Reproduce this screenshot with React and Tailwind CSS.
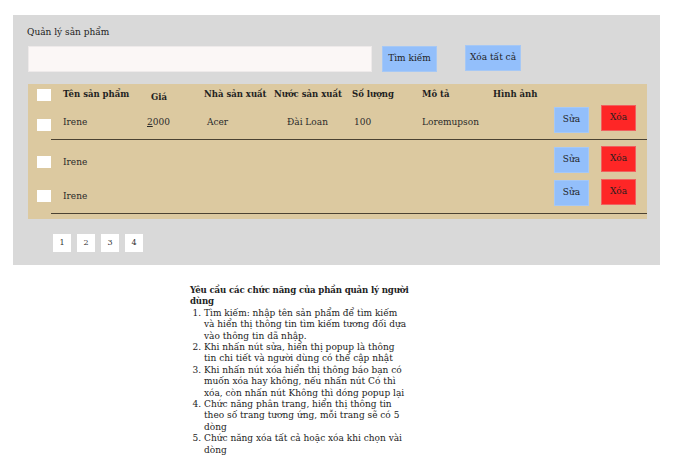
import React from "react";

const F = { fontFamily: '"DejaVu Serif", "Liberation Serif", serif' };

function Box({ className = "" }) {
  return <div className={`w-[14px] h-[12px] bg-white ${className}`} />;
}

function Btn({ children, red, className = "" }) {
  return (
    <div
      className={`w-[35px] h-[26px] flex items-center justify-center text-[9px] text-[#1e1e1e] ${
        red ? "bg-[#fe2626] border border-[#f06060]" : "bg-[#93bffb] border border-[#a6c8f5]"
      } ${className}`}
    >
      {children}
    </div>
  );
}

function DataRow({ h, boxTop, textTop, suaTop, xoaTop, full }) {
  return (
    <div className={`flex items-start ${h}`}>
      <div className="w-[35px] pl-[9px]">
        <Box className={boxTop} />
      </div>
      <div className={`flex text-[9px] text-[#2a2a2a] leading-[12px] ${textTop}`}>
        <div className="w-[84px]">Irene</div>
        {full ? (
          <>
            <div className="w-[57px]">
              <span className="underline">2</span>000
            </div>
            <div className="w-[70px] pl-[3px]">Acer</div>
            <div className="w-[78px] pl-[13px]">Đài Loan</div>
            <div className="w-[70px] pl-[2px]">100</div>
            <div className="w-[132px]">Loremupson</div>
          </>
        ) : (
          <div className="w-[407px]" />
        )}
      </div>
      <Btn className={suaTop}>Sửa</Btn>
      <Btn red className={`ml-[12px] ${xoaTop}`}>Xóa</Btn>
    </div>
  );
}

export default function App() {
  return (
    <div className="w-[678px] h-[463px] bg-white overflow-hidden" style={F}>
      <div className="ml-[13px] mt-[15px] w-[647px] h-[250px] bg-[#d9d9d9] pl-[15px] pt-[11px]">
        <div className="text-[9px] leading-[12px] text-[#222] -ml-[1px]">Quản lý sản phẩm</div>
        <div className="flex items-start mt-[8px]">
          <div className="w-[344px] h-[26px] bg-[#fbf7f6] border border-[#eeeaea]" />
          <div className="ml-[10px] w-[55px] h-[26px] bg-[#93bffb] border border-[#a6c8f5] flex items-center justify-center text-[9px] text-[#1e1e1e]">
            Tìm kiếm
          </div>
          <div className="ml-[28px] -mt-[1px] w-[56px] h-[26px] bg-[#93bffb] border border-[#a6c8f5] flex items-center justify-center text-[9px] text-[#1e1e1e]">
            Xóa tất cả
          </div>
        </div>
        <div className="mt-[12px] w-[619px] h-[135px] bg-[#dcc9a0]">
          <div className="flex items-start h-[20px]">
            <div className="w-[35px] pl-[9px] pt-[5px]">
              <Box />
            </div>
            <div className="flex text-[8.5px] font-bold text-[#1f1f1f] leading-[12px] pt-[4px] whitespace-nowrap">
              <div className="w-[84px]">Tên sản phẩm</div>
              <div className="w-[57px] pl-[4px] pt-[3px]">Giá</div>
              <div className="w-[70px]">Nhà sản xuất</div>
              <div className="w-[78px]">Nước sản xuất</div>
              <div className="w-[70px]">Số lượng</div>
              <div className="w-[71px]">Mô tả</div>
              <div className="w-[61px]">Hình ảnh</div>
            </div>
          </div>
          <DataRow h="h-[35px]" boxTop="mt-[15px]" textTop="mt-[12px]" suaTop="mt-[3px]" xoaTop="mt-[1px]" full />
          <div className="ml-[23px] h-px bg-[#4b4232]" />
          <DataRow h="h-[35px]" boxTop="mt-[16px]" textTop="mt-[16px]" suaTop="mt-[7px]" xoaTop="mt-[6px]" />
          <DataRow h="h-[38px]" boxTop="mt-[15px]" textTop="mt-[15px]" suaTop="mt-[5px]" xoaTop="mt-[4px]" />
          <div className="ml-[23px] h-px bg-[#4b4232]" />
        </div>
        <div className="flex gap-[6px] ml-[25px] mt-[15px]">
          {["1", "2", "3", "4"].map((n) => (
            <div
              key={n}
              className="w-[18px] h-[18px] bg-white flex items-center justify-center text-[8px] text-[#333]"
            >
              {n}
            </div>
          ))}
        </div>
      </div>
      <div className="ml-[190px] mt-[20px] w-[218px] text-[9px] leading-[11.4px] text-[#222]">
        <div className="font-bold text-[8.6px] tracking-[-0.15px]">
          <div className="whitespace-nowrap">Yêu cầu các chức năng của phần quản lý người</div>
          <div>dùng</div>
        </div>
        <ol className="list-decimal pl-[14px]">
          <li>Tìm kiếm: nhập tên sản phẩm để tìm kiếm và hiển thị thông tin tìm kiếm tương đối dựa vào thông tin dã nhập.</li>
          <li>Khi nhấn nút sửa, hiển thị popup là thông tin chi tiết và người dùng có thể cập nhật</li>
          <li>Khi nhấn nút xóa hiển thị thông báo bạn có muốn xóa hay không, nếu nhấn nút Có thì xóa, còn nhấn nút Không thì dóng popup lại</li>
          <li>Chức năng phân trang, hiển thị thông tin theo số trang tương ứng, mỗi trang sẽ có 5 dòng</li>
          <li>Chức năng xóa tất cả hoặc xóa khi chọn vài dòng</li>
        </ol>
      </div>
    </div>
  );
}
